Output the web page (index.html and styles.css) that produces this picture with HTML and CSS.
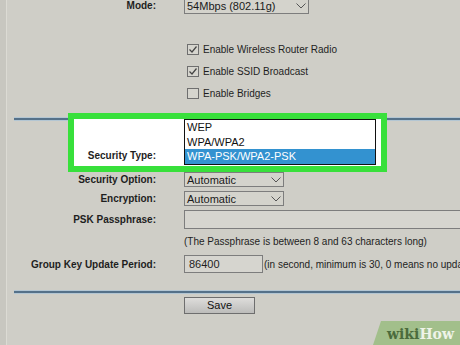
FILE: index.html
```html
<!DOCTYPE html>
<html lang="en">
<head>
    <meta charset="UTF-8">
    <meta name="viewport" content="width=device-width, initial-scale=1.0">
    <title>Wireless Settings</title>
    <link rel="stylesheet" href="styles.css">
</head>
<body>
    <div class="page">
        <!-- Mode -->
        <div class="row row-mode">
            <div class="label">Mode:</div>
            <div class="select select-mode">
                <span>54Mbps (802.11g)</span>
                <svg class="chevron" width="10" height="6" viewBox="0 0 10 6"><polyline points="0.5,0.5 5,5 9.5,0.5" fill="none" stroke="#555" stroke-width="1"/></svg>
            </div>
        </div>

        <!-- Checkboxes -->
        <div class="checks">
            <div class="check-row">
                <span class="box"><svg width="10" height="9" viewBox="0 0 10 9"><polyline points="1.5,4.5 4,7 8.5,1.5" fill="none" stroke="#444" stroke-width="1.2"/></svg></span>
                Enable Wireless Router Radio
            </div>
            <div class="check-row">
                <span class="box"><svg width="10" height="9" viewBox="0 0 10 9"><polyline points="1.5,4.5 4,7 8.5,1.5" fill="none" stroke="#444" stroke-width="1.2"/></svg></span>
                Enable SSID Broadcast
            </div>
            <div class="check-row">
                <span class="box"></span>
                Enable Bridges
            </div>
        </div>

        <div class="divider"></div>

        <!-- Security Type (highlighted, list open) -->
        <div class="highlight">
            <div class="label label-type">Security Type:</div>
            <div class="options">
                <div class="option">WEP</div>
                <div class="option">WPA/WPA2</div>
                <div class="option selected">WPA-PSK/WPA2-PSK</div>
            </div>
        </div>

        <div class="row row-option">
            <div class="label">Security Option:</div>
            <div class="select select-small">
                <span>Automatic</span>
                <svg class="chevron" width="10" height="6" viewBox="0 0 10 6"><polyline points="0.5,0.5 5,5 9.5,0.5" fill="none" stroke="#555" stroke-width="1"/></svg>
            </div>
        </div>

        <div class="row row-enc">
            <div class="label">Encryption:</div>
            <div class="select select-small">
                <span>Automatic</span>
                <svg class="chevron" width="10" height="6" viewBox="0 0 10 6"><polyline points="0.5,0.5 5,5 9.5,0.5" fill="none" stroke="#555" stroke-width="1"/></svg>
            </div>
        </div>

        <div class="row row-psk">
            <div class="label">PSK Passphrase:</div>
            <div class="input input-psk"></div>
        </div>

        <div class="note">(The Passphrase is between 8 and 63 characters long)</div>

        <div class="row row-group">
            <div class="label">Group Key Update Period:</div>
            <div class="input input-group">86400</div>
            <span class="hint">(in second, minimum is 30, 0 means no update)</span>
        </div>

        <div class="divider divider-bottom"></div>

        <div class="row row-save">
            <div class="label"></div>
            <div class="button">Save</div>
        </div>
    </div>

    <!-- Watermark -->
    <div class="wikihow"><span class="wiki">wiki</span><span class="how">How</span></div>
</body>
</html>
```

FILE: styles.css
```css
* {
    margin: 0;
    padding: 0;
    box-sizing: border-box;
}

html, body {
    height: 100%;
}

body {
    font-family: 'Liberation Sans', Arial, sans-serif;
    font-size: 10px;
    color: #1e1e1e;
    background: linear-gradient(to right, #c8c7c0 0, #c8c7c0 6px, #dcdbd4 6px, #dcdbd4 7px, #cfcec7 7px);
    overflow: hidden;
    position: relative;
}

.page {
    display: flex;
    flex-direction: column;
}

/* Rows */
.row {
    display: flex;
    align-items: center;
    white-space: nowrap;
}

.label {
    width: 156px;
    flex: none;
    margin-right: 28px;
    text-align: right;
    font-weight: bold;
}

.row-mode {
    margin-top: -3px;
    height: 17px;
}

.row-option {
    height: 15px;
}

.row-enc {
    margin-top: 4px;
    height: 15px;
}

.row-psk {
    margin-top: 4px;
    height: 19px;
}

.row-group {
    margin-top: 6px;
    height: 18px;
}

.row-save {
    margin-top: 4px;
    height: 17px;
}

/* Select boxes */
.select {
    display: flex;
    flex: none;
    align-items: center;
    justify-content: space-between;
    height: 100%;
    padding: 0 2px 0 2px;
    border: 1px solid #7d7d7d;
    background: #d4d3cc;
    font-size: 11px;
    color: #1a1a1a;
}

.select-mode {
    width: 125px;
}

.select-small {
    width: 100px;
}

.chevron {
    flex: none;
}

/* Inputs */
.input {
    flex: none;
    height: 100%;
    border: 1px solid #7d7d7d;
    background: #d6d5cf;
    font-size: 11px;
    line-height: 16px;
    padding-left: 4px;
}

.input-psk {
    width: 300px;
}

.input-group {
    width: 79px;
}

.hint {
    flex: none;
    margin-left: 1px;
}

.note {
    margin-top: 6px;
    margin-left: 184px;
    line-height: 14px;
    white-space: nowrap;
}

/* Checkboxes */
.checks {
    margin-top: 24px;
    margin-left: 187px;
}

.check-row {
    display: flex;
    align-items: center;
    height: 22px;
}

.box {
    display: flex;
    align-items: center;
    justify-content: center;
    width: 12px;
    height: 11px;
    margin-right: 4px;
    border: 1px solid #6f6f6f;
    background: #d6d5ce;
}

/* Dividers */
.divider {
    margin-top: 14px;
    margin-left: 14px;
    height: 2px;
    background: #557189;
    box-shadow: 0 1px 0 #b3c6d3, 0 -1px 0 #b3c6d3;
}

.divider-bottom {
    margin-top: 18px;
}

/* Highlighted security type */
.highlight {
    display: flex;
    align-items: flex-start;
    margin-top: -7px;
    margin-left: 68px;
    width: 319px;
    height: 59px;
    border: 6px solid #38e03b;
    background: #fff;
}

.label-type {
    width: 82px;
    margin-top: 30px;
    line-height: 14px;
}

.options {
    width: 192px;
    border: 1px solid #111;
    font-size: 11px;
    color: #111;
}

.option {
    height: 14px;
    line-height: 14px;
    padding-left: 2px;
}

.option:first-child {
    height: 15px;
    line-height: 15px;
}

.option.selected {
    height: 15px;
    line-height: 15px;
    background: #3392d0;
    color: #fff;
}

/* Save button */
.button {
    width: 71px;
    height: 100%;
    border: 1px solid #6e6e6e;
    background: linear-gradient(#dedddb, #bcbcba);
    font-size: 11px;
    line-height: 15px;
    text-align: center;
    color: #111;
}

/* wikiHow watermark */
.wikihow {
    position: absolute;
    right: 0;
    bottom: 0;
    width: 87px;
    height: 24px;
    padding-left: 14px;
    padding-top: 3px;
    background: #a2bf8b;
    clip-path: polygon(8px 0, 100% 0, 100% 100%, 0 100%);
    font-family: 'DejaVu Serif', serif;
    font-weight: bold;
    font-size: 14px;
    line-height: 20px;
}

.wiki {
    color: #4b6b3c;
}

.how {
    color: #eef3e8;
}
```
